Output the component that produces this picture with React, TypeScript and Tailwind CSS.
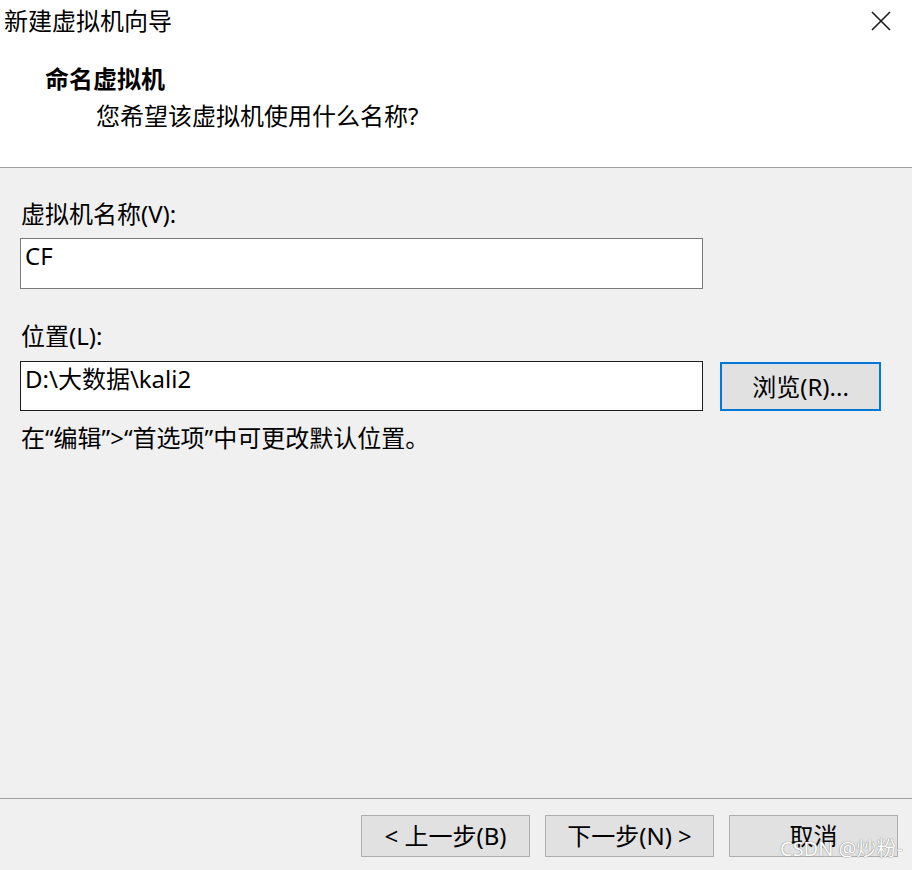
import React from "react";

const font = "font-['Noto_Sans','Noto_Sans_CJK_SC',sans-serif]";

const FooterButton = ({ children }: { children: React.ReactNode }) => (
  <button className="w-[169px] h-[42px] bg-[#e1e1e1] border border-[#adadad] text-[24px] leading-[32px] text-black flex items-center justify-center">
    {children}
  </button>
);

const App = () => {
  return (
    <div className={`w-[912px] h-[870px] flex flex-col bg-[#f0f0f0] text-black relative overflow-hidden ${font}`}>
      {/* Header */}
      <div className="h-[168px] shrink-0 bg-white border-b border-[#a0a0a0]">
        <div className="flex justify-between items-center pt-[5px] pl-[4px] pr-[21px]">
          <span className="text-[24px] leading-[32px]">新建虚拟机向导</span>
          <svg width="20" height="20" viewBox="0 0 20 20" className="text-[#1a1a1a]">
            <path d="M1 1 L19 19 M19 1 L1 19" stroke="currentColor" strokeWidth="1.6" fill="none" />
          </svg>
        </div>
        <div className="mt-[26px] pl-[45px] text-[24px] leading-[32px] font-bold">命名虚拟机</div>
        <div className="mt-[5px] pl-[96px] text-[24px] leading-[32px]">您希望该虚拟机使用什么名称?</div>
      </div>

      {/* Body */}
      <div className="flex-1 flex flex-col pt-[30px]">
        <div className="pl-[21px] text-[24px] leading-[32px]">虚拟机名称(V):</div>
        <div className="mt-[8px] ml-[20px] w-[683px] h-[51px] bg-white border border-[#7a7a7a] pl-[4px] pt-[1px] text-[24px] leading-[32px]">
          CF
        </div>

        <div className="mt-[31px] pl-[21px] text-[24px] leading-[32px]">位置(L):</div>
        <div className="mt-[9px] ml-[20px] flex items-start gap-[17px]">
          <div className="w-[683px] h-[50px] bg-white border border-[#1e1e1e] pl-[4px] pt-[1px] text-[24px] leading-[32px]">
            D:\大数据\kali2
          </div>
          <button className="mt-[1px] w-[161px] h-[49px] bg-[#e1e1e1] border-2 border-[#0078d7] text-[24px] leading-[32px] flex items-center justify-center">
            浏览(R)...
          </button>
        </div>
        <div className="mt-[11px] pl-[21px] text-[24px] leading-[32px]">在“编辑”&gt;“首选项”中可更改默认位置。</div>
      </div>

      {/* Footer */}
      <div className="h-[72px] shrink-0 border-t border-[#a0a0a0] flex justify-end items-start pt-[16px] pr-[14px] gap-[15px]">
        <FooterButton>&lt; 上一步(B)</FooterButton>
        <FooterButton>下一步(N) &gt;</FooterButton>
        <FooterButton>取消</FooterButton>
      </div>

      {/* watermark */}
      <div className="absolute left-[780px] top-[836px] text-[20px] leading-[26px] text-white [text-shadow:0_0_1px_#888,0_0_1px_#888]">
        CSDN @炒粉-
      </div>
    </div>
  );
};

export default App;
